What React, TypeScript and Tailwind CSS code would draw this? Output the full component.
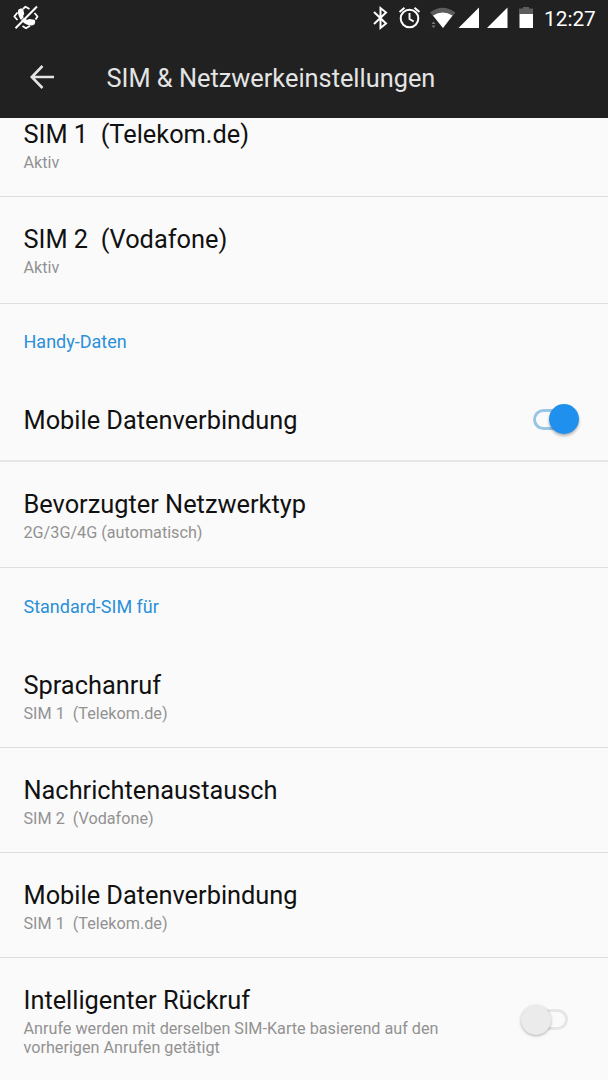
import React from 'react';

interface RowProps {
  title: string;
  subtitle?: string;
  className?: string;
  children?: React.ReactNode;
}

const StatusBar = () => (
  <div className="h-9 shrink-0 flex items-center pl-[13px] pr-3 text-white">
    {/* Klingelton aus */}
    <svg className="w-[27px] h-9" viewBox="13 0 27 36" fill="none">
      <path d="M17.500 12.500l-3.200 4 3.200 3.500M23 9l2.500-2.300 4 2.300M34.500 13l3 3.500-2 3M22.500 26l3.500 2.200 4-2.500" stroke="#fff" strokeWidth="1.800" strokeLinejoin="round" />
      <path d="M18.300 10c.9-1.500 4.200-2 4.900-.5l1 4c.2 1.200-1.100 1.600-1 2.600.3 1.700 1.900 3.200 3.500 3.600 1 .2 1.600-1 2.800-.8l4.600.8c1.600.5 1.400 3.900-.1 5.100-2.700 1.700-8.100.2-11.700-3.300-3.200-3.300-5.200-9-4-11.500z" fill="#fff" />
      <path d="M14.600 27L28 13.300" stroke="#212121" strokeWidth="0.900" />
      <path d="M15.500 28.200L37 6.500" stroke="#fff" strokeWidth="2" />
    </svg>
    <div className="flex-1" />
    <svg className="w-[176px] h-9 shrink-0" viewBox="366 0 176 36" fill="none">
      <path d="M374 12l12 11.500-5.500 4.500V8l5.500 4.500L374 24" stroke="#fff" strokeWidth="2" />
      <circle cx="409.500" cy="18.500" r="8.800" stroke="#fff" strokeWidth="2" />
      <path d="M409.500 13v6l4.200 2.500M399.500 12l5-4.200M419.500 12l-5-4.200" stroke="#fff" strokeWidth="1.900" />
      <path d="M430 12.500q12.500-9.500 25.500 0L443 28z" fill="#5c5c5c" />
      <path d="M433 15.500q9.700-6 19.500 0L443 28z" fill="#fff" />
      <path d="M431.500 24l2-2.500 2 2.500zM431.500 25.500h4l-2 2.500z" fill="#777" />
      <path d="M479 7.500V28h-20.500zM507.500 7.500V28H487z" fill="#fff" />
      <path d="M523 7h6v1.500h4V14h-14V8.500h4z" fill="#5c5c5c" />
      <path d="M519.500 14h13.500v14h-13.500z" fill="#fff" />
    </svg>
    <span className="w-[54px] pl-[2px] text-[20.8px] leading-9 pt-px whitespace-nowrap">12:27</span>
  </div>
);

const Row: React.FC<RowProps> = ({ title, subtitle, className = '', children }) => (
  <div className={`flex justify-between shrink-0 pl-[23.5px] pr-6 ${className}`}>
    <div className="w-[440px]">
      <div className="text-[25.35px] leading-[28px] text-[#111] whitespace-pre">{title}</div>
      {subtitle && <div className="mt-[5px] text-[16.2px] leading-[19px] text-[#929292] whitespace-pre">{subtitle}</div>}
    </div>
    {children}
  </div>
);

const Section = ({ label, className = '' }: { label: string; className?: string }) => (
  <div className={`h-[76px] shrink-0 pl-[23.5px] text-[18px] leading-[22px] text-[#2a90d8] ${className}`}>{label}</div>
);

const App = () => (
  <div className="w-[608px] h-[1080px] overflow-hidden flex flex-col bg-[#fafafa] font-['Roboto',sans-serif]">
    <header className="h-[118px] shrink-0 bg-[#212121]">
      <StatusBar />
      <div className="h-[82px] flex items-center pl-[30px] text-[#e4e4e4]">
        <svg className="w-6 h-6" viewBox="0 0 24 24" fill="none" stroke="currentColor" strokeWidth="2.600">
          <path d="M12.500 1L1.800 12l10.700 11M1.800 12H24" />
        </svg>
        <h1 className="ml-[52.5px] pt-px text-[25.35px] leading-[30px]">SIM &amp; Netzwerkeinstellungen</h1>
      </div>
    </header>

    <Row title="SIM 1  (Telekom.de)" subtitle="Aktiv" className="h-[79px] pt-[2px] border-b border-[#dedede]" />
    <Row title="SIM 2  (Vodafone)" subtitle="Aktiv" className="h-[107px] pt-[28px] border-b border-[#dedede]" />

    <Section label="Handy-Daten" className="pt-[27px]" />
    <Row title="Mobile Datenverbindung" className="h-[82px] pt-[26px] border-b-2 border-[#e6e6e6]">
      {/* eingeschaltet */}
      <div className="relative w-[52px] h-8 -mt-px">
        <div className="absolute left-[0.5px] top-[4px] w-9 h-[21px] rounded-full border-[3px] border-[#98c6e4]" />
        <div className="absolute left-[17px] -top-px w-[30px] h-[30px] rounded-full bg-[#2090ee] shadow-[0_2px_3px_rgba(0,0,0,0.3)]" />
      </div>
    </Row>
    <Row title="Bevorzugter Netzwerktyp" subtitle="2G/3G/4G (automatisch)" className="h-[106px] pt-[28px] border-b border-[#dedede]" />

    <Section label="Standard-SIM für" className="pt-[28px]" />
    <Row title="Sprachanruf" subtitle="SIM 1  (Telekom.de)" className="h-[104px] pt-[27px] border-b border-[#dedede]" />
    <Row title="Nachrichtenaustausch" subtitle="SIM 2  (Vodafone)" className="h-[105px] pt-[28px] border-b border-[#dedede]" />
    <Row title="Mobile Datenverbindung" subtitle="SIM 1  (Telekom.de)" className="h-[105px] pt-[28px] border-b border-[#dedede]" />
    <Row
      title="Intelligenter Rückruf"
      subtitle={'Anrufe werden mit derselben SIM-Karte basierend auf den\nvorherigen Anrufen getätigt'}
      className="h-[122px] pt-[28px]"
    >
      {/* ausgeschaltet */}
      <div className="relative w-16 h-8">
        <div className="absolute left-[11.5px] top-[23px] w-9 h-[21px] rounded-full border-[3px] border-[#e6e6e6]" />
        <div className="absolute left-[0.5px] top-[19px] w-[30px] h-[30px] rounded-full bg-[#ebebeb] shadow-[0_1px_3px_rgba(0,0,0,0.3)]" />
      </div>
    </Row>
  </div>
);

export default App;
